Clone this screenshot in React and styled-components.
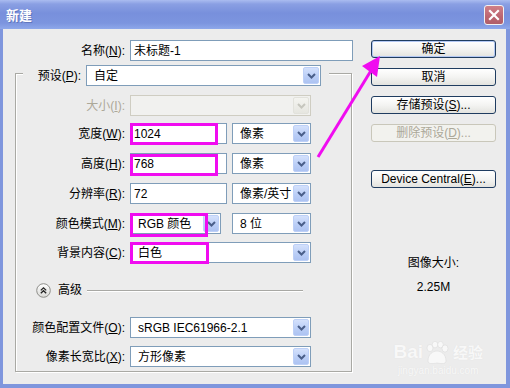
import React from 'react';
import styled, { createGlobalStyle } from 'styled-components';

const GlobalStyle = createGlobalStyle`
  html, body { margin: 0; padding: 0; background: #ececec; }
  body {
    font-family: "Liberation Sans", "Noto Sans CJK SC", sans-serif;
    font-size: 12px;
    color: #000;
  }
  u { text-decoration: underline; text-underline-offset: 1px; }
`;

const Window = styled.div`
  position: relative;
  width: 510px;
  height: 388px;
  display: flex;
  flex-direction: column;
  background: #7f96dd;
  overflow: hidden;
`;

const TitleBar = styled.div`
  height: 29px;
  flex: none;
  display: flex;
  align-items: center;
  padding-left: 6px;
  background: linear-gradient(to bottom, #aabcf0 0%, #8a9fe3 14%, #7890dc 45%, #7c95df 80%, #8ea8ea 100%);
`;

const Title = styled.span`
  color: #fff;
  font-family: "Noto Sans CJK SC", sans-serif;
  font-weight: bold;
  font-size: 13px;
  text-shadow: 1px 1px 0 #6076bd;
`;

const CloseButton = styled.div`
  margin-left: auto;
  margin-right: 6px;
  width: 20px;
  height: 20px;
  box-sizing: border-box;
  border: 1px solid #f2f2f2;
  border-radius: 3px;
  background: linear-gradient(to bottom, #d08088, #bc6570 60%, #b05e68);
  display: flex;
  align-items: center;
  justify-content: center;
`;

const Client = styled.div`
  flex: 1;
  margin: 0 4px 4px 3px;
  background: #ececec;
  display: flex;
  padding-top: 11px;
`;

const LeftPane = styled.div`
  width: 360px;
  display: flex;
  flex-direction: column;
`;

const RightPane = styled.div`
  width: 125px;
  margin-left: 8px;
  display: flex;
  flex-direction: column;
  align-items: stretch;
`;

const Row = styled.div`
  display: flex;
  align-items: center;
  gap: 5px;
  margin-top: ${(p) => p.$mt || 0}px;
`;

const Label = styled.span`
  width: ${(p) => p.$w}px;
  flex: none;
  text-align: right;
  white-space: nowrap;
  line-height: 16px;
  color: ${(p) => (p.$disabled ? '#aca899' : '#000')};
`;

const Box = styled.div`
  position: relative;
  width: ${(p) => p.$w}px;
  height: 21px;
  flex: none;
  box-sizing: border-box;
  display: flex;
  align-items: center;
  margin-left: ${(p) => p.$ml || 0}px;
  padding-left: ${(p) => p.$pl}px;
  border: 1px solid ${(p) => (p.$disabled ? '#cfcdc2' : '#7f9db9')};
  background: ${(p) => (p.$disabled ? '#f1f1ef' : '#fff')};
  white-space: nowrap;
  line-height: 16px;
`;

const Value = styled.span`
  flex: 1;
  overflow: hidden;
`;

const DropButton = styled.div`
  width: 16px;
  height: 17px;
  margin-right: 1px;
  box-sizing: border-box;
  border-radius: 2px;
  display: flex;
  align-items: center;
  justify-content: center;
  border: 1px solid ${(p) => (p.$disabled ? '#e2e2dc' : '#bdd0f7')};
  background: ${(p) =>
    p.$disabled
      ? 'linear-gradient(to bottom, #f4f4f0, #e6e6e0)'
      : 'linear-gradient(to bottom, #d4e1fc, #b9cdf6 60%, #adc3f2)'};
`;

const Mark = styled.span`
  position: absolute;
  left: -1px;
  top: ${(p) => p.$t}px;
  width: ${(p) => p.$w}px;
  height: ${(p) => p.$h}px;
  box-sizing: border-box;
  border: 3px solid #f00cf0;
  pointer-events: none;
`;

const Group = styled.div`
  margin: 12px 0 0 12px;
  width: 337px;
  box-sizing: border-box;
  border: 1px solid #a9a9a4;
  box-shadow: inset 1px 1px 0 #fff, 1px 1px 0 #fff;
  display: flex;
  flex-direction: column;
  padding-bottom: 4px;
`;

const Legend = styled.div`
  align-self: flex-start;
  margin: -9px 0 0 7px;
  padding: 0 8px 0 13px;
  background: #ececec;
  display: flex;
  align-items: center;
  gap: 5px;
`;

const AdvancedRow = styled.div`
  display: flex;
  align-items: center;
  margin: 20px 48px 0 20px;
  height: 14px;
`;

const AdvancedText = styled.span`
  margin: 0 5px 0 7px;
  line-height: 16px;
`;

const Rule = styled.div`
  flex: 1;
  height: 1px;
  background: #a8a8a4;
  box-shadow: 0 1px 0 #fff;
`;

const Button = styled.div`
  height: 18px;
  box-sizing: border-box;
  margin-top: ${(p) => p.$mt || 0}px;
  border: 1px solid ${(p) => (p.$disabled ? '#c9c7ba' : '#1f3c60')};
  border-radius: 3px;
  background: ${(p) =>
    p.$disabled ? '#f2f2ee' : 'linear-gradient(to bottom, #ffffff, #f4f4f2 50%, #e3e3df)'};
  box-shadow: ${(p) => (p.$default ? 'inset 0 0 0 1px #b3c8f3' : 'none')};
  color: ${(p) => (p.$disabled ? '#aca899' : '#000')};
  text-align: center;
  line-height: 16px;
  white-space: nowrap;
`;

const Info = styled.div`
  margin-top: ${(p) => p.$mt}px;
  text-align: center;
  line-height: 16px;
`;

const Overlay = styled.svg`
  position: absolute;
  left: 0;
  top: 0;
  pointer-events: none;
`;

const Watermark = styled.div`
  position: absolute;
  right: 27px;
  bottom: 10px;
  display: flex;
  flex-direction: column;
  align-items: center;
  color: #f8f8f8;
  text-shadow: 0 0 1px #dedede;
  pointer-events: none;
`;

const WatermarkLogo = styled.div`
  display: flex;
  align-items: flex-end;
  font-family: "Liberation Sans", sans-serif;
  font-weight: bold;
  font-size: 19px;
  line-height: 20px;
`;

const WatermarkCn = styled.span`
  font-family: "Noto Sans CJK SC", sans-serif;
  font-size: 15px;
  margin-left: 2px;
`;

const WatermarkUrl = styled.span`
  font-size: 10px;
  line-height: 14px;
  margin-top: 2px;
`;

const Chevron = ({ disabled }) => (
  <svg width="9" height="6" viewBox="0 0 9 6">
    <polyline
      points="1,1 4.5,4.5 8,1"
      fill="none"
      stroke={disabled ? '#c6c6be' : '#4a5f8a'}
      strokeWidth="2"
    />
  </svg>
);

const TextBox = ({ w, children, mark }) => (
  <Box $w={w} $pl={3}>
    <Value>{children}</Value>
    {mark && <Mark $t={mark.t} $w={mark.w} $h={mark.h} />}
  </Box>
);

const Select = ({ w, ml, children, disabled, mark }) => (
  <Box $w={w} $ml={ml} $pl={7} $disabled={disabled}>
    <Value>{children}</Value>
    <DropButton $disabled={disabled}>
      <Chevron disabled={disabled} />
    </DropButton>
    {mark && <Mark $t={mark.t} $w={mark.w} $h={mark.h} />}
  </Box>
);

const ExpandIcon = () => (
  <svg width="15" height="15" viewBox="0 0 15 15">
    <defs>
      <linearGradient id="exp" x1="0" y1="0" x2="0" y2="1">
        <stop offset="0" stopColor="#ffffff" />
        <stop offset="1" stopColor="#d9d9d6" />
      </linearGradient>
    </defs>
    <circle cx="7.5" cy="7.5" r="6.8" fill="url(#exp)" stroke="#8e8e8a" />
    <polyline points="4.8,7.4 7.5,4.8 10.2,7.4" fill="none" stroke="#222" strokeWidth="1.3" />
    <polyline points="4.8,10.3 7.5,7.7 10.2,10.3" fill="none" stroke="#222" strokeWidth="1.3" />
  </svg>
);

const Paw = () => (
  <svg width="26" height="24" viewBox="0 0 26 24" style={{ margin: '0 1px -3px' }}>
    <g fill="#f8f8f8" stroke="#dcdcdc" strokeWidth="0.6">
      <ellipse cx="6" cy="7" rx="3" ry="3.6" />
      <ellipse cx="11" cy="3.6" rx="2.8" ry="3.3" />
      <ellipse cx="16.5" cy="3.6" rx="2.8" ry="3.3" />
      <ellipse cx="21" cy="7.5" rx="3" ry="3.6" />
      <path d="M4 20 C4 13 9 10 13 10 C17 10 22 13 22 20 C22 23 18 23 13 22 C8 23 4 23 4 20 Z" />
    </g>
  </svg>
);

export default function App() {
  return (
    <>
      <GlobalStyle />
      <Window>
        <TitleBar>
          <Title>新建</Title>
          <CloseButton>
            <svg width="12" height="12" viewBox="0 0 12 12">
              <path d="M2 2 L10 10 M10 2 L2 10" stroke="#fff" strokeWidth="2.2" strokeLinecap="square" />
            </svg>
          </CloseButton>
        </TitleBar>

        <Client>
          <LeftPane>
            <Row>
              <Label $w={122}>名称(<u>N</u>):</Label>
              <TextBox w={223}>未标题-1</TextBox>
            </Row>

            <Group>
              <Legend>
                <Label $w={45}>预设(<u>P</u>):</Label>
                <Select w={235}>自定</Select>
              </Legend>

              <Row $mt={9}>
                <Label $w={109} $disabled>大小(<u>I</u>):</Label>
                <Select w={181} disabled />
              </Row>
              <Row $mt={7}>
                <Label $w={109}>宽度(<u>W</u>):</Label>
                <TextBox w={97} mark={{ t: -1, w: 88, h: 22 }}>1024</TextBox>
                <Select w={79}>像素</Select>
              </Row>
              <Row $mt={9}>
                <Label $w={109}>高度(<u>H</u>):</Label>
                <TextBox w={97} mark={{ t: 0, w: 88, h: 22 }}>768</TextBox>
                <Select w={79}>像素</Select>
              </Row>
              <Row $mt={9}>
                <Label $w={109}>分辨率(<u>R</u>):</Label>
                <TextBox w={97}>72</TextBox>
                <Select w={79}>像素/英寸</Select>
              </Row>
              <Row $mt={9}>
                <Label $w={109}>颜色模式(<u>M</u>):</Label>
                <Select w={91} mark={{ t: -1, w: 78, h: 24 }}>RGB 颜色</Select>
                <Select w={79} ml={6}>8 位</Select>
              </Row>
              <Row $mt={8}>
                <Label $w={109}>背景内容(<u>C</u>):</Label>
                <Select w={181} mark={{ t: -1, w: 79, h: 22 }}>白色</Select>
              </Row>

              <AdvancedRow>
                <ExpandIcon />
                <AdvancedText>高级</AdvancedText>
                <Rule />
              </AdvancedRow>

              <Row $mt={20}>
                <Label $w={109}>颜色配置文件(<u>O</u>):</Label>
                <Select w={181}>sRGB IEC61966-2.1</Select>
              </Row>
              <Row $mt={8}>
                <Label $w={109}>像素长宽比(<u>X</u>):</Label>
                <Select w={181}>方形像素</Select>
              </Row>
            </Group>
          </LeftPane>

          <RightPane>
            <Button $default>确定</Button>
            <Button $mt={10}>取消</Button>
            <Button $mt={10}>存储预设(<u>S</u>)...</Button>
            <Button $mt={10} $disabled>删除预设(<u>D</u>)...</Button>
            <Button $mt={28}>Device Central(<u>E</u>)...</Button>
            <Info $mt={67}>图像大小:</Info>
            <Info $mt={8}>2.25M</Info>
          </RightPane>
        </Client>

        <Watermark>
          <WatermarkLogo>
            Bai<Paw />
            <WatermarkCn>经验</WatermarkCn>
          </WatermarkLogo>
          <WatermarkUrl>jingyan.baidu.com</WatermarkUrl>
        </Watermark>

        <Overlay width="510" height="388" viewBox="0 0 510 388">
          <line x1="318" y1="157" x2="372" y2="69" stroke="#f00cf0" strokeWidth="3" />
          <polygon points="380,56 362,66 377,77" fill="#f00cf0" />
        </Overlay>
      </Window>
    </>
  );
}
